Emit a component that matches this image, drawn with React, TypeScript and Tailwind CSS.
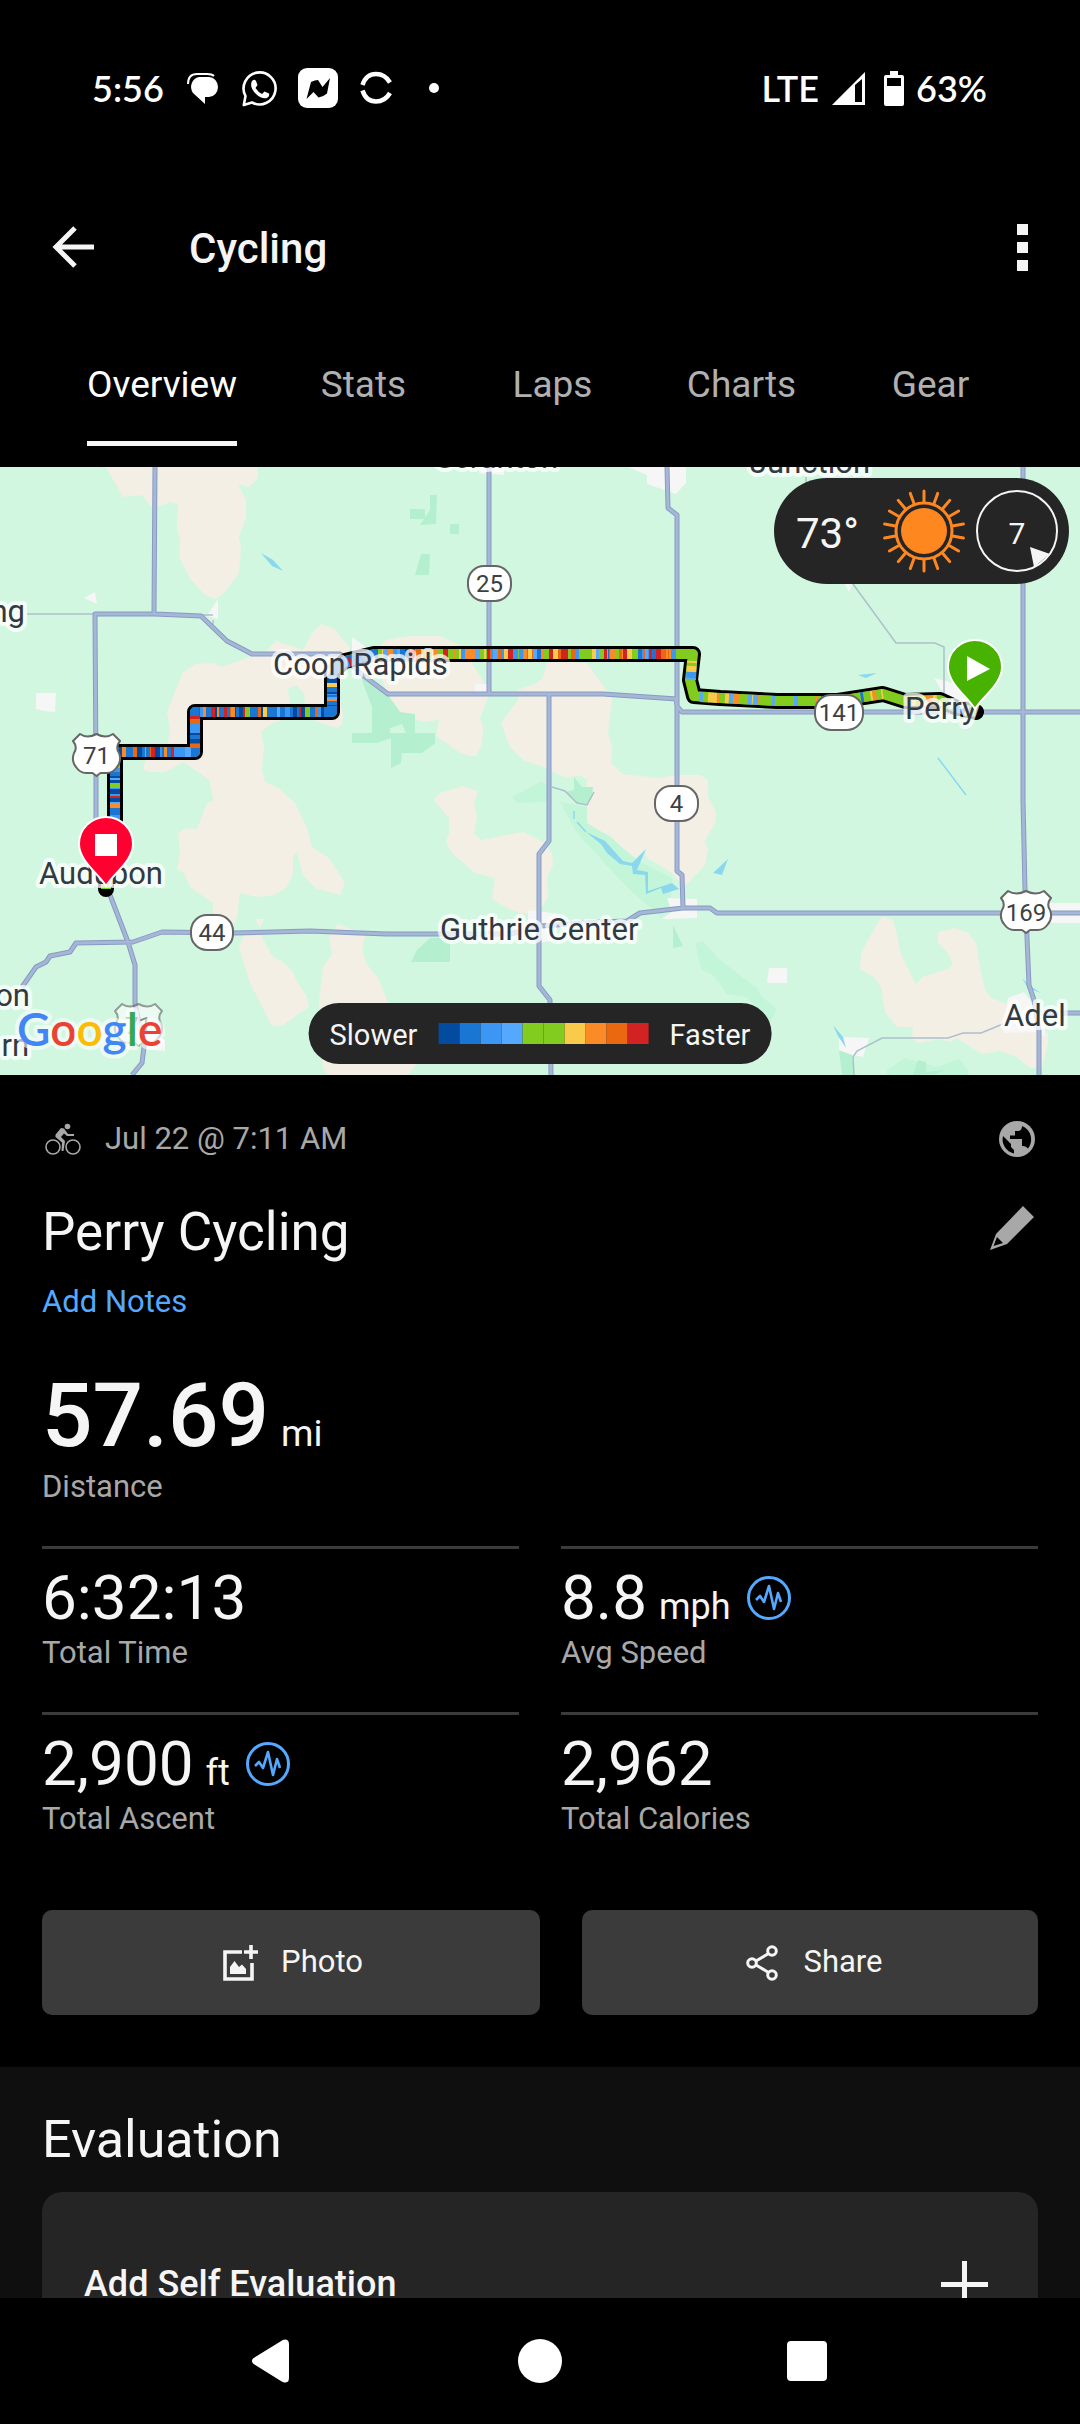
import type { ReactNode } from "react";

type Point = [number, number];

const speedColors = {
  navy: "#034b9f",
  blue: "#1976d2",
  azure: "#3b97f3",
  sky: "#54a9ff",
  green: "#82cb1f",
  yellow: "#f9cb4b",
  orange: "#fa8b27",
  rust: "#ea680f",
  red: "#d32222",
};

const { navy, blue, azure, sky, green, yellow, orange, rust, red } = speedColors;

const legend = [navy, blue, azure, sky, green, green, yellow, orange, rust, red];

const coolMix = [navy, blue, azure, red, green, sky, yellow, orange, navy, azure, red, blue, azure, rust, navy, blue, blue];
const warmMix = [red, rust, orange, green, yellow, azure, green, blue, orange, green, red, sky, yellow, rust, green];
const greenMix = [green, green, green, green, yellow, green, green, sky, green, green, green, orange, green, blue];

const routeSegments: { from: Point; to: Point; mix: string[] }[] = [
  { from: [115, 832], to: [115, 758], mix: coolMix },
  { from: [119, 752], to: [191, 752], mix: coolMix },
  { from: [195, 748], to: [195, 716], mix: coolMix },
  { from: [199, 712], to: [326, 712], mix: coolMix },
  { from: [332, 706], to: [332, 676], mix: coolMix },
  { from: [346, 663], to: [362, 657], mix: coolMix },
  { from: [373, 654], to: [410, 654], mix: coolMix },
  { from: [410, 654], to: [676, 654], mix: warmMix },
  { from: [692, 661], to: [691, 680], mix: [green, sky, green, azure, yellow, orange, green] },
  { from: [700, 697], to: [777, 701], mix: [green, yellow, green, orange, green, sky, yellow] },
  { from: [777, 701], to: [838, 701], mix: greenMix },
  { from: [838, 701], to: [883, 694], mix: greenMix },
  { from: [905, 701], to: [940, 700], mix: [green, yellow, green, orange] },
  { from: [953, 706], to: [972, 713], mix: [yellow, blue, navy, azure] },
];

const routePath =
  "M106 889 V882 L115 850 V752 H195 V712 H332 V672 L345 661 L374 654 H693 L690 680 L694 696 L720 698 L777 701 L838 701 L883 694 L905 701 L940 700 L955 707 L976 712";

const stripes = routeSegments.flatMap(({ from, to, mix }, s) => {
  const length = Math.hypot(to[0] - from[0], to[1] - from[1]);
  const out: { a: Point; b: Point; color: string }[] = [];
  let seed = s * 7919 + 17;
  const next = (n: number) => {
    seed = (seed * 16807) % 2147483647;
    return Math.floor(seed / 1000) % n;
  };
  next(1);
  let at = 0;
  while (at < length) {
    const size = 1 + next(5);
    const color = mix[next(mix.length)];
    const end = Math.min(length, at + size);
    const pick = (d: number): Point => [
      from[0] + ((to[0] - from[0]) * d) / length,
      from[1] + ((to[1] - from[1]) * d) / length,
    ];
    out.push({ a: pick(at), b: pick(end), color });
    at = end;
  }
  return out;
});

const fields = [
  "106,467 123,497 142,495 153,509 170,502 178,504 177,531 180,538 179,557 191,580 205,595 215,599 223,594 239,573 241,548 239,537 246,517 246,500 238,484 249,487 258,478 258,467",
  "266,652 276,641 303,650 312,633 321,624 334,629 350,647 342,673 339,693 343,717 342,724 338,728 327,725 300,715 275,722 261,731 264,747 262,770 265,782 278,788 295,803 307,828 312,847 329,858 345,883 340,895 315,888 303,875 297,852 293,857 293,873 287,887 275,895 257,897 240,893 237,917 235,923 213,917 213,903 191,888 184,873 177,869 180,852 178,834 186,828 197,829 207,803 214,801 209,780 194,769 183,762 165,772 150,772 143,770 147,753 167,747 170,730 167,712 183,672 195,664 213,663 222,667 247,658",
  "372,654 386,640 410,636 440,636 457,644 470,660 487,687 489,695 480,718 483,727 482,745 476,756 470,756 460,753 436,736 439,720 423,722 401,713 388,695",
  "239,947 243,937 248,933 261,935 267,947 273,957 283,962 293,972 297,982 307,997 309,1007 298,1014 282,1026 272,1026 250,983",
  "255,919 264,919 260,928",
  "329,937 338,924 360,933 365,936 362,950 366,963 378,978 388,1002 417,1064 408,1075 328,1075 323,1068 319,1003 323,967 332,954",
  "434,800 440,793 463,786 478,791 474,803 477,817 474,833 481,840 523,832 543,842 552,853 553,865 547,878 548,897 540,910 523,914 507,908 492,899 495,878 475,873 452,853 446,842 449,833 449,818",
  "548,660 587,663 605,688 612,698 608,732 612,747 611,763 618,770 623,774 657,778 680,775 700,775 708,780 708,797 716,812 715,823 704,842 708,848 705,865 685,886 680,883 672,873 646,857 645,849 637,858 629,857 610,835 593,832 586,822 587,780 580,775 567,778 553,772 547,768 523,760 510,747 501,723 518,700 518,690 537,683 543,677",
  "882,916 893,920 897,935 900,952 916,985 922,977 948,969 953,964 948,954 938,942 938,932 955,928 968,933 976,943 980,967 985,990 991,998 1007,1004 1048,1033 1048,1043 1042,1068 1030,1068 1017,1057 1000,1051 982,1054 957,1038 950,1042 940,1039 917,1043 912,1038 913,1027 897,1027 885,1012 881,987 874,977 860,969 861,954 867,942",
];

const meadows = [
  "512,797 542,781 552,790 547,802 517,803",
  "560,802 587,807 587,823 610,837 637,860 672,878 670,903 662,918 627,887 577,833",
  "695,943 703,941 720,960 757,988 762,997 777,1009 770,1023 747,997 727,994 713,975 701,969",
  "887,1070 905,1058 937,1067 959,1059 968,1070 968,1075 887,1075",
];

const woods = [
  "430,495 437,495 436,524 420,525 430,510",
  "410,509 425,509 425,519 410,519",
  "450,524 459,524 459,534 450,534",
  "421,554 430,554 429,575 415,575",
  "360,673 388,695 400,712 415,714 415,733 435,733 435,743 422,753 402,753 401,763 391,768 391,738 377,743 352,743 352,733 372,733 372,707 363,683",
  "574,777 582,787 593,787 592,798 587,805 577,803 565,792 574,790",
  "411,962 417,950 430,938 450,937 450,962",
  "673,925 683,946 673,948",
  "839,1051 852,1052 854,1075 842,1075",
  "918,1060 926,1062 926,1072 945,1070 935,1074 913,1075",
];

const towns = [
  "84,598 95,592 97,604",
  "207,616 218,599 218,619",
  "36,693 56,693 55,712 45,711 36,709",
  "352,637 370,650 378,675 352,672",
  "475,684 488,684 488,692 475,692",
  "479,467 504,467 504,475 479,473",
  "628,467 647,475 647,484 676,494 686,483 686,467",
  "845,584 852,584 849,592",
  "934,678 953,683 973,707 960,715 943,693",
  "528,910 560,914 555,940 540,943 528,930",
  "667,898 697,899 697,918 662,919 672,912",
  "769,968 787,968 787,983 767,983",
  "839,1037 869,1038 863,1057 852,1055 839,1050",
  "1043,903 1080,903 1080,923 1043,923",
  "1008,998 1024,992 1045,1020 1045,1037 1038,1032 1003,1033",
  "143,1030 165,1040 165,1051 143,1049",
];

const lakes = [
  "261,553 273,560 283,571 272,566",
  "586,832 605,841 623,861 632,863 646,849 637,870 648,872 648,891 672,883 679,889 663,894 661,888 646,894 645,875 633,874 632,866 620,864 607,853 601,844",
  "713,873 728,859 722,875",
  "858,675 877,673 866,678",
  "833,1025 843,1037 846,1048 838,1036",
  "1022,978 1030,986 1041,993 1028,988",
];

const roads =
  "M155 467 L154 614 M96 870 V774 L95 614 H155 L201 616 L227 641 L252 654 H340 L360 673 L388 694 H603 L677 699 " +
  "M106 885 L110 895 L128 942 L135 965 V1003 L144 1047 L142 1063 L132 1075 " +
  "M22 987 L36 967 L46 962 L50 956 L70 952 L76 943 L133 942 L162 932 L234 933 L310 931 L360 933 L387 934 L510 934 L541 926 L600 922 L627 921 L640 913 L683 908 H710 L717 913 H1080 " +
  "M489 467 V694 M549 694 V841 L539 854 V986 L550 1000 L551 1075 " +
  "M667 467 L668 508 L677 515 V871 L682 875 L683 908 M676 699 L677 706 L682 712 H1080 " +
  "M1023 467 V800 L1025 890 L1029 985 L1034 1000 L1039 1031 V1075 M1036 1013 H1080";

const lanes =
  "M201 615 H213 M213 620 V625 M27 614 H95 M853 584 L896 643 H935 L944 647 V693 M806 477 V486 M1003 1024 L981 1033 H963 L948 1038 H882 L857 1051 L853 1057 L854 1075 M552 787 L565 791 L577 803 L587 805 L594 792";

const places: { name: string; x: number; y: number; anchor?: "end" | "start" }[] = [
  { name: "Coon Rapids", x: 273, y: 675 },
  { name: "Audubon", x: 39, y: 884 },
  { name: "Guthrie Center", x: 440, y: 940 },
  { name: "Perry", x: 905, y: 719 },
  { name: "Adel", x: 1004, y: 1026 },
  { name: "Junction", x: 750, y: 473 },
  { name: "Scranton", x: 435, y: 468 },
  { name: "ng", x: 25, y: 622, anchor: "end" },
  { name: "on", x: 30, y: 1006, anchor: "end" },
  { name: "rn", x: 29, y: 1056, anchor: "end" },
];

const stateRoutes = [
  { n: "25", x: 468, y: 566, w: 43 },
  { n: "4", x: 655, y: 786, w: 43 },
  { n: "141", x: 815, y: 695, w: 48 },
  { n: "44", x: 191, y: 915, w: 42 },
];

function UsShield({ x, y, n, w }: { x: number; y: number; n: string; w: number }) {
  const r = w - 24;
  return (
    <g transform={`translate(${x} ${y})`}>
      <path
        d={`M8 1 Q${w / 4 + 3} 6 ${w / 2} 1 Q${(w * 3) / 4 - 3} 6 ${w - 8} 1 L${w - 1} 8 Q${w - 6} 14 ${w - 2} 20 Q${w + 1} 28 ${w - 4} 34 Q${w - 8} 40 ${w - 14} 40 H${r / 2 + 16} L${w / 2} 43 L${w / 2 - 4} 40 H14 Q8 40 4 34 Q-1 28 2 20 Q6 14 1 8 Z`}
        fill="#fff"
        stroke="#666"
        strokeWidth="2"
        strokeLinejoin="round"
      />
      <text x={w / 2} y={31} textAnchor="middle" fontSize="24" fill="#3c4043">
        {n}
      </text>
    </g>
  );
}

function Pin({ x, y, color, children }: { x: number; y: number; color: string; children: ReactNode }) {
  return (
    <g transform={`translate(${x} ${y})`}>
      <path
        d="M0 0 C-7 -12 -27 -25 -27 -42 A27 27 0 0 1 27 -42 C27 -25 7 -12 0 0 Z"
        fill={color}
        stroke="#fff"
        strokeWidth="2"
      />
      {children}
    </g>
  );
}

function RideMap() {
  return (
    <svg
      viewBox="0 467 1080 608"
      preserveAspectRatio="xMidYMid slice"
      className="block h-[608px] w-full bg-[#d1f7e0] font-['Roboto',sans-serif]"
      role="img"
      aria-label="Map of the ride from Perry to Audubon"
    >
      <g fill="#f4efe4">
        {fields.map((p) => (
          <polygon key={p} points={p} />
        ))}
      </g>
      <polygon points="288,688 297,686 304,693 305,707 290,705" fill="#d1f7e0" />
      <g fill="#c3f5d8">
        {meadows.map((p) => (
          <polygon key={p} points={p} />
        ))}
      </g>
      <g fill="#b4f0cf">
        {woods.map((p) => (
          <polygon key={p} points={p} />
        ))}
      </g>
      <polygon points="390,728 402,724 406,733 390,733" fill="#d1f7e0" />
      <g fill="#f6f6f6">
        {towns.map((p) => (
          <polygon key={p} points={p} />
        ))}
      </g>
      <g fill="#8bd8ee">
        {lakes.map((p) => (
          <polygon key={p} points={p} />
        ))}
      </g>
      <path d="M574 811 V819 M577 822 L586 832 M938 758 L966 795" stroke="#8bd8ee" strokeWidth="1.5" fill="none" />
      <path d={lanes} stroke="#adc0cc" strokeWidth="1.5" fill="none" />
      <path d={roads} stroke="#889bc2" strokeWidth="5" fill="none" strokeLinejoin="round" />
      <path d={roads} stroke="#a6b6d7" strokeWidth="3" fill="none" strokeLinejoin="round" />

      <path d={routePath} stroke="#000" strokeWidth="16" fill="none" strokeLinejoin="round" strokeLinecap="round" />
      <path d={routePath} stroke="#82cb1f" strokeWidth="10" fill="none" strokeLinejoin="round" />
      <path
        d="M115 850 V752 H195 V712 H332 V672 L345 661 L374 654"
        stroke="#1976d2"
        strokeWidth="10"
        fill="none"
        strokeLinejoin="round"
      />
      {stripes.map(({ a, b, color }, i) => (
        <line key={i} x1={a[0]} y1={a[1]} x2={b[0]} y2={b[1]} stroke={color} strokeWidth="10" />
      ))}

      {stateRoutes.map(({ n, x, y, w }) => (
        <g key={n}>
          <rect x={x} y={y} width={w} height="35" rx="16" fill="#fff" stroke="#666" strokeWidth="2" />
          <text x={x + w / 2} y={y + 26} textAnchor="middle" fontSize="24" fill="#3c4043">
            {n}
          </text>
        </g>
      ))}
      <UsShield x={72} y={733} n="71" w={49} />
      <UsShield x={1000} y={890} n="169" w={52} />
      <g opacity="0.6">
        <UsShield x={114} y={1003} n="71" w={49} />
      </g>

      <g fontSize="31" fill="#33393f" stroke="#fff" strokeOpacity="0.75" strokeWidth="8" strokeLinejoin="round" paintOrder="stroke">
        {places.map(({ name, x, y, anchor }) => (
          <text key={name} x={x} y={y} textAnchor={anchor ?? "start"}>
            {name}
          </text>
        ))}
      </g>

      <text
        x="17"
        y="1046"
        fontSize="46"
        className="font-['Lato',sans-serif] font-semibold"
        stroke="#fff"
        strokeOpacity="0.6"
        strokeWidth="8"
        strokeLinejoin="round"
        paintOrder="stroke"
      >
        <tspan fill="#4285f4">G</tspan>
        <tspan fill="#ea4335">o</tspan>
        <tspan fill="#fbbc05">o</tspan>
        <tspan fill="#4285f4">g</tspan>
        <tspan fill="#34a853">l</tspan>
        <tspan fill="#ea4335">e</tspan>
      </text>

      <Pin x={975} y={709} color="#47b200">
        <path d="M-8 -53 L15 -40 L-8 -28 Z" fill="#fff" />
      </Pin>
      <Pin x={106} y={886} color="#ff0030">
        <rect x="-11" y="-52" width="22" height="22" fill="#fff" />
      </Pin>
    </svg>
  );
}

function Weather() {
  return (
    <div className="absolute top-[11px] right-[11px] flex h-[106px] w-[295px] items-center rounded-full bg-[#252525] pr-[11px] pl-[22px] text-[#f5f5f5]">
      <span className="flex-1 pt-1 text-[42px]">73°</span>
      <svg viewBox="-42 -42 84 84" className="h-[84px] w-[84px]" stroke="#ff8720" strokeWidth="3" fill="none">
        <circle r="23" fill="#ff8720" stroke="none" />
        <circle r="28" />
        {Array.from({ length: 18 }, (_, i) => (
          <path key={i} d="M0 -29 V-40" strokeLinecap="round" transform={`rotate(${i * 20})`} />
        ))}
      </svg>
      <div className="relative ml-[10px] flex h-[82px] w-[82px] items-center justify-center pt-1 text-[30px]">
        <svg viewBox="-41 -41 82 82" className="absolute inset-0 h-full w-full">
          <circle r="40" fill="none" stroke="#f5f5f5" strokeWidth="2" />
          <path d="M13 16 L33 23 L17 36 Z" fill="#f5f5f5" />
        </svg>
        7
      </div>
    </div>
  );
}

function SpeedLegend() {
  return (
    <div className="absolute bottom-[11px] left-1/2 flex h-[61px] -translate-x-1/2 items-center gap-[21px] rounded-full bg-[#252525] px-[21px] text-[29px] text-[#f5f5f5]">
      <span className="pt-1">Slower</span>
      <div className="flex h-[21px] w-[210px]">
        {legend.map((color, i) => (
          <span key={i} className="flex-1" style={{ backgroundColor: color }} />
        ))}
      </div>
      <span className="pt-1">Faster</span>
    </div>
  );
}

function PulseIcon() {
  return (
    <svg viewBox="0 0 44 44" className="ml-4 h-11 w-11" fill="none" stroke="#54a9ff">
      <circle cx="22" cy="22" r="20.5" strokeWidth="3" />
      <path d="M9 24 L13 20 L17 26 L22 10 L27 33 L31 17 L34 26" strokeWidth="2.6" strokeLinejoin="round" />
    </svg>
  );
}

function Stat({ value, unit, label, pulse }: { value: string; unit?: string; label: string; pulse?: boolean }) {
  return (
    <div className="h-[166px] border-t-[3px] border-[#3b3b3b] pt-[13px]">
      <div className="flex h-[72px] items-center">
        <span className="text-[62px] leading-[72px]">{value}</span>
        {unit && <span className="self-end pl-3 text-[36px] leading-[54px]">{unit}</span>}
        {pulse && <PulseIcon />}
      </div>
      <p className="text-[31px] leading-[38px] text-[#a8a8a8]">{label}</p>
    </div>
  );
}

const tabs = ["Overview", "Stats", "Laps", "Charts", "Gear"];

export default function App() {
  return (
    <div className="flex h-screen flex-col overflow-hidden bg-black font-['Roboto',sans-serif] text-[#f5f5f5]">
      <div className="flex h-[176px] shrink-0 items-center justify-between pr-[93px] pl-[92px] font-['Lato',sans-serif] text-[36px] font-semibold text-white">
        <div className="flex items-center">
          <time className="w-[95px]">5:56</time>
          <svg viewBox="0 0 32 32" className="h-8 w-8">
            <path d="M1 12 Q1 2 10 2 H20 Q25 2 27 4" fill="none" stroke="#fff" strokeWidth="2" />
            <path d="M12 5 H22 A9 10 0 0 1 22 25 H18 V32 L6 21 A9 10 0 0 1 12 5 Z" fill="#fff" />
          </svg>
          <svg viewBox="0 0 36 37" className="ml-[23px] h-[37px] w-9">
            <path
              d="M3.500 26 A16 16 0 1 1 10 32.500 L1.800 35 Z"
              fill="none"
              stroke="#fff"
              strokeWidth="2.600"
              strokeLinejoin="round"
            />
            <path
              d="M10 11 Q12.500 8.500 14 11 L15.500 15 L13.500 18 Q16 22 20 24 L22.500 21.500 L27 23.500 Q28 26 25 28 Q20 29.500 14 24 Q7 17 10 11 Z"
              fill="#fff"
            />
          </svg>
          <svg viewBox="0 0 40 40" className="ml-[20px] h-10 w-10">
            <rect width="40" height="40" rx="9" fill="#fff" />
            <path d="M8.500 31 L13 14 Q17 12 20 12 L24.500 19 L32 10 L29 25.500 Q25 29 20.500 29.500 L15.500 24 Z" fill="#000" />
          </svg>
          <svg viewBox="0 0 32 34" className="ml-[22px] h-[34px] w-8" fill="none" stroke="#fff" strokeWidth="4.500">
            <path d="M2.500 14 Q6 3 16 3 Q25 3 30 11.500" />
            <path d="M2.500 19.500 Q6 30.500 16 30.500 Q25 30.500 30 22" />
          </svg>
          <span className="ml-[37px] h-[10px] w-[10px] rounded-full bg-white" />
        </div>
        <div className="flex items-center">
          <span>LTE</span>
          <svg viewBox="0 0 33 34" className="ml-[13px] h-[34px] w-[33px]">
            <path d="M0 34 L33 1 V34 Z M23 14 V31 H30 V8 Z" fill="#fff" fillRule="evenodd" />
          </svg>
          <svg viewBox="0 0 20 35" className="mr-[12px] ml-[19px] h-[35px] w-5">
            <path d="M6 0 H14 V4 H18 Q20 4 20 6 V33 Q20 35 18 35 H2 Q0 35 0 33 V6 Q0 4 2 4 H6 Z M3 7 V15 H17 V7 Z" fill="#fff" fillRule="evenodd" />
          </svg>
          <span>63%</span>
        </div>
      </div>

      <header className="flex h-[142px] shrink-0 items-center pr-[42px] pl-[41px]">
        <button aria-label="Back" className="flex h-16 w-16 items-center justify-center">
          <svg viewBox="0 0 42 42" className="h-[42px] w-[42px]" fill="none" stroke="#f5f5f5" strokeWidth="5">
            <path d="M42 21 H4 M23 2 L4 21 L23 40" />
          </svg>
        </button>
        <h1 className="flex-1 pt-[2px] pl-[84px] text-[42px] font-medium">Cycling</h1>
        <button aria-label="More options" className="flex flex-col items-center gap-[7px] px-[10px]">
          <span className="h-[11px] w-[11px] bg-[#f5f5f5]" />
          <span className="h-[11px] w-[11px] bg-[#f5f5f5]" />
          <span className="h-[11px] w-[11px] bg-[#f5f5f5]" />
        </button>
      </header>

      <nav className="flex shrink-0 pb-[21px] pl-[55px]" role="tablist">
        {tabs.map((tab, i) => (
          <button
            key={tab}
            role="tab"
            aria-selected={i === 0}
            className="flex min-w-[189px] justify-center px-8 text-[37px] text-[#b0b0b0] aria-selected:text-white"
          >
            <span
              className={
                i === 0
                  ? "flex h-32 items-center border-b-[5px] border-[#f5f5f5] pt-[10px]"
                  : "flex h-32 items-center border-b-[5px] border-transparent pt-[10px]"
              }
            >
              {tab}
            </span>
          </button>
        ))}
      </nav>

      <main className="min-h-0 flex-1 overflow-hidden">
        <section className="relative">
          <RideMap />
          <Weather />
          <SpeedLegend />
        </section>

        <section className="px-[42px] pt-8">
          <div className="flex h-16 items-center text-[31px] text-[#a8a8a8]">
            <svg viewBox="0 0 36 32" className="mr-[24px] ml-[3px] h-8 w-9" fill="none" stroke="#a8a8a8" strokeWidth="1.600">
              <circle cx="8" cy="24" r="7" />
              <circle cx="28" cy="24" r="7" />
              <circle cx="22.500" cy="3.500" r="2.800" fill="#a8a8a8" stroke="none" />
              <path d="M16 5 L19 5.500 L23 11 H29 V13 H22 L19 10.500 L16 14 L20 18 L18.500 28 H16.500 L17 19.500 L10.500 14 Q10 12 11 11 Z" fill="#a8a8a8" stroke="none" />
            </svg>
            <span className="flex-1">Jul 22 @ 7:11 AM</span>
            <svg viewBox="0 0 36 36" className="mr-[3px] h-9 w-9" aria-label="Public">
              <circle cx="18" cy="18" r="18" fill="#a8a8a8" />
              <path d="M4 15 L12 23 V26 L15 29 V32.500 A14.500 14.500 0 0 1 4 15 Z" fill="#000" />
              <path d="M23 5 A14.500 14.500 0 0 1 29 27.500 Q27 24.500 23 25 V18 H11 V14.500 H16 V10 H20 Q23 9 23 5 Z" fill="#000" />
            </svg>
          </div>
          <div className="flex items-center justify-between pt-[27px]">
            <h2 className="text-[53px] leading-[68px]">Perry Cycling</h2>
            <button aria-label="Edit name" className="mr-1 mb-2">
              <svg viewBox="0 0 44 44" className="h-11 w-11">
                <path d="M33 0 L44 11 L17 38 L0 44 L6 28 Z M7 31 L3.500 40 L13 37 Z" fill="#a8a8a8" fillRule="evenodd" />
              </svg>
            </button>
          </div>
          <a href="#notes" className="mt-3 inline-block text-[31px] leading-[48px] text-[#54a9ff]">
            Add Notes
          </a>

          <div className="pt-[38px]">
            <p className="flex items-baseline">
              <span className="text-[89px] leading-[104px] font-medium">57.69</span>
              <span className="pl-3 text-[37px]">mi</span>
            </p>
            <p className="text-[31px] leading-[38px] text-[#a8a8a8]">Distance</p>
          </div>

          <div className="grid grid-cols-2 gap-x-[42px] pt-10">
            <Stat value="6:32:13" label="Total Time" />
            <Stat value="8.8" unit="mph" label="Avg Speed" pulse />
            <Stat value="2,900" unit="ft" label="Total Ascent" pulse />
            <Stat value="2,962" label="Total Calories" />
          </div>

          <div className="grid grid-cols-[498fr_456fr] gap-[42px] pt-8 pb-[52px] text-[31px]">
            <button className="flex h-[105px] items-center justify-center gap-[22px] rounded-[10px] bg-[#3b3b3b] pl-1">
              <svg viewBox="0 0 36 36" className="h-9 w-9" fill="none" stroke="#f5f5f5" strokeWidth="3.600">
                <path d="M19 7 H2 V34 H29 V18" />
                <path d="M28 0 V14 M21 7 H35" />
                <path d="M7 29 V22 L11.500 16 L16 22 L19 19.500 L23 24 V29 Z" fill="#f5f5f5" stroke="none" />
              </svg>
              Photo
            </button>
            <button className="flex h-[105px] items-center justify-center gap-[26px] rounded-[10px] bg-[#3b3b3b] pl-2">
              <svg viewBox="0 0 32 36" className="h-9 w-8" fill="none" stroke="#f5f5f5" strokeWidth="3">
                <circle cx="26" cy="6" r="4.300" />
                <circle cx="26" cy="30" r="4.300" />
                <circle cx="6" cy="18" r="4.300" />
                <path d="M10 16 L22.500 8.500 M10 20 L22.500 27.500" />
              </svg>
              Share
            </button>
          </div>
        </section>

        <section className="bg-[#0f0f0f] px-[42px] pt-[38px]">
          <h2 className="text-[52px] leading-[70px]">Evaluation</h2>
          <button className="mt-[17px] flex h-[184px] w-full items-center justify-between rounded-[20px] bg-[#252525] pr-[50px] pl-[42px] text-[36px] font-medium">
            Add Self Evaluation
            <svg viewBox="0 0 47 47" className="h-[47px] w-[47px]" stroke="#f5f5f5" strokeWidth="5">
              <path d="M23.500 0 V47 M0 23.500 H47" />
            </svg>
          </button>
        </section>
      </main>

      <nav className="flex h-[126px] shrink-0 items-center justify-center gap-[225px] bg-black pr-1" aria-label="System">
        <button aria-label="System back">
          <svg viewBox="0 0 44 46" className="h-[46px] w-11">
            <path d="M34 3 L5 21 Q3 23 5 25 L34 43 Q39 45 39 40 V6 Q39 1 34 3 Z" fill="#fff" stroke="#fff" strokeWidth="2" />
          </svg>
        </button>
        <button aria-label="Home" className="h-11 w-11 rounded-full bg-white" />
        <button aria-label="Recent apps" className="h-10 w-10 rounded-[4px] bg-white" />
      </nav>
    </div>
  );
}
